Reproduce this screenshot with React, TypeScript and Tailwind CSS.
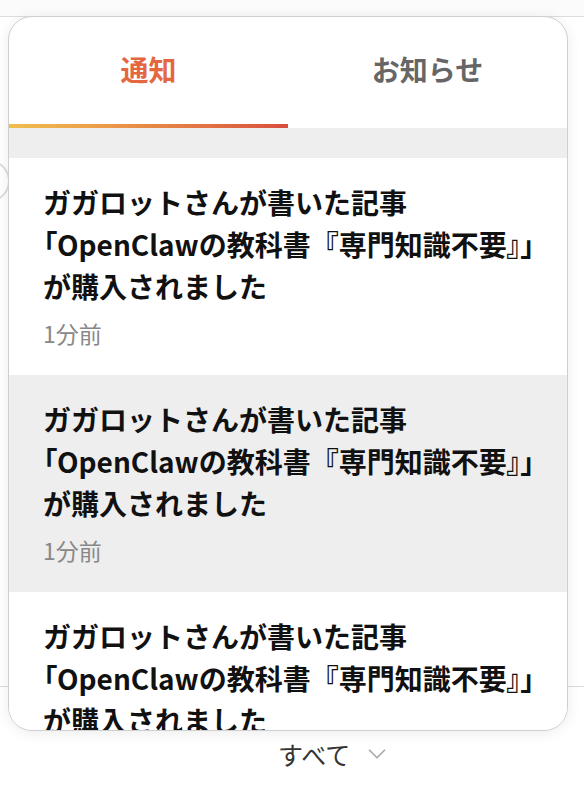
import { ChevronDown } from 'lucide-react'

type Notice = {
  id: number
  author: string
  title: string
  ago: string
}

const notices: Notice[] = [
  { id: 1, author: 'ガガロット', title: 'OpenClawの教科書『専門知識不要', ago: '1分前' },
  { id: 2, author: 'ガガロット', title: 'OpenClawの教科書『専門知識不要', ago: '1分前' },
  { id: 3, author: 'ガガロット', title: 'OpenClawの教科書『専門知識不要', ago: '1分前' },
]

function NoticeItem({ notice, shaded }: { notice: Notice; shaded: boolean }) {
  return (
    <div className={`pl-[34px] pr-4 pt-[23px] pb-[25px] ${shaded ? 'bg-[#eeeeee]' : 'bg-white'}`}>
      <p className="text-[28px] leading-[42px] font-bold text-[#111] whitespace-nowrap">
        <span className="block">{notice.author}さんが書いた記事</span>
        {/* brackets set proportional so the title fits on one line */}
        <span className="block">
          <span className="[font-feature-settings:'palt']">「</span>
          {notice.title}
          <span className="[font-feature-settings:'palt']">』」</span>
        </span>
        <span className="block">が購入されました</span>
      </p>
      <p className="mt-[9px] text-[23px] leading-[34px] text-[#888]">{notice.ago}</p>
    </div>
  )
}

export default function App() {
  return (
    <div className="relative w-[584px] h-[788px] overflow-hidden bg-white font-['Noto_Sans_CJK_JP',sans-serif]">
      {/* page behind the dropdown */}
      <div className="h-[17px] border-b border-[#dddddd] bg-[#fbfbfb]" />
      <div className="flex flex-col">
        <div className="mt-[143px] ml-[-32px] w-[42px] h-[42px] rounded-full border-2 border-[#dddddd]" />
        <div className="mt-[484px] h-px bg-[#dddddd]" />
        <div className="mt-[50px] pl-[278px] flex items-center gap-[12px] text-[25px] leading-[34px] text-[#333]">
          <span>すべて</span>
          <ChevronDown className="w-[30px] h-[30px] text-[#aaaaaa]" strokeWidth={1.4} />
        </div>
      </div>

      {/* notifications dropdown */}
      <div className="absolute left-2 top-4 w-[560px] h-[715px] rounded-[24px] border border-[#cfcfcf] bg-white overflow-hidden shadow-[0_2px_14px_rgba(0,0,0,0.08)]">
        <div className="flex h-[111px]">
          <button className="relative flex-1 flex items-center justify-center pb-[8px] text-[28px] font-bold text-[#e4673f]">
            通知
            <span className="absolute left-0 right-0 bottom-0 h-[4px] bg-gradient-to-r from-[#efbf4e] to-[#d94d3e]" />
          </button>
          <button className="flex-1 flex items-center justify-center pb-[8px] text-[28px] font-bold text-[#666]">
            お知らせ
          </button>
        </div>
        <div className="h-[30px] bg-[#eeeeee]" />
        {notices.map((n, i) => (
          <NoticeItem key={n.id} notice={n} shaded={i % 2 === 1} />
        ))}
      </div>
    </div>
  )
}
